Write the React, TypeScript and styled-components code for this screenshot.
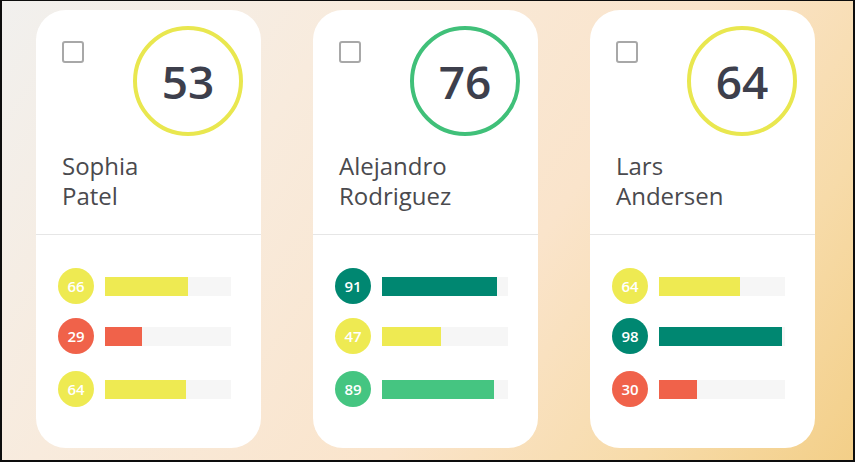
import styled, { createGlobalStyle } from "styled-components";

const GlobalStyle = createGlobalStyle`
  html, body {
    margin: 0;
    padding: 0;
  }
  body {
    font-family: "Open Sans", "Noto Sans", Arial, sans-serif;
  }
`;

const COLORS = {
  yellow: "#eeea52",
  red: "#f0624a",
  teal: "#008771",
  green: "#45c581",
};

const RING = {
  yellow: "#e9e74f",
  green: "#40c079",
};

const Frame = styled.div`
  width: 855px;
  height: 462px;
  box-sizing: border-box;
  border: 2px solid #0d0d0d;
  border-top-width: 1px;
  background: linear-gradient(
    125deg,
    #f1f0ee 0%,
    #f8ebdd 30%,
    #fae4cb 60%,
    #f7dba9 82%,
    #f3cf88 100%
  );
  display: flex;
  align-items: flex-start;
  gap: 52px;
  padding: 9px 0 0 34px;
`;

const Card = styled.div`
  width: 225px;
  height: 438px;
  background: #fff;
  border-radius: 30px;
  display: flex;
  flex-direction: column;
  overflow: hidden;
`;

const Header = styled.div`
  display: flex;
  justify-content: space-between;
  align-items: flex-start;
  padding: 16px 18px 0 26px;
`;

const Check = styled.span`
  display: block;
  width: 18px;
  height: 18px;
  margin-top: 15px;
  border: 2px solid #a8a8a8;
  border-radius: 3px;
  background: #fff;
`;

const ScoreRing = styled.div<{ $ring: string }>`
  width: 110px;
  height: 110px;
  box-sizing: border-box;
  border: 4px solid ${(p) => p.$ring};
  border-radius: 50%;
  display: flex;
  align-items: center;
  justify-content: center;
  font-size: 46px;
  font-weight: 600;
  color: #3d3f4c;
`;

const Name = styled.div`
  padding: 15px 26px 23px;
  font-size: 24px;
  line-height: 30px;
  color: #4a4a4e;
  border-bottom: 1px solid #e6e6e6;
`;

const NameLine = styled.span`
  display: block;
`;

const Metrics = styled.div`
  display: flex;
  flex-direction: column;
  gap: 14px;
  padding: 33px 30px 0 22px;
`;

const Row = styled.div`
  display: flex;
  align-items: center;
  gap: 11px;

  &:last-child {
    margin-top: 3px;
  }
`;

const Dot = styled.div<{ $color: string }>`
  width: 36px;
  height: 36px;
  flex: none;
  border-radius: 50%;
  background: ${(p) => p.$color};
  color: #fff;
  display: flex;
  align-items: center;
  justify-content: center;
  font-size: 15px;
  font-weight: 600;
`;

const Track = styled.div`
  width: 126px;
  height: 19px;
  background: #f6f6f6;
`;

const Fill = styled.div<{ $color: string }>`
  height: 100%;
  background: ${(p) => p.$color};
`;

type Tone = keyof typeof COLORS;

interface Person {
  first: string;
  last: string;
  score: number;
  ring: keyof typeof RING;
  metrics: { value: number; tone: Tone }[];
}

const people: Person[] = [
  {
    first: "Sophia",
    last: "Patel",
    score: 53,
    ring: "yellow",
    metrics: [
      { value: 66, tone: "yellow" },
      { value: 29, tone: "red" },
      { value: 64, tone: "yellow" },
    ],
  },
  {
    first: "Alejandro",
    last: "Rodriguez",
    score: 76,
    ring: "green",
    metrics: [
      { value: 91, tone: "teal" },
      { value: 47, tone: "yellow" },
      { value: 89, tone: "green" },
    ],
  },
  {
    first: "Lars",
    last: "Andersen",
    score: 64,
    ring: "yellow",
    metrics: [
      { value: 64, tone: "yellow" },
      { value: 98, tone: "teal" },
      { value: 30, tone: "red" },
    ],
  },
];

const App = () => (
  <>
    <GlobalStyle />
    <Frame>
      {people.map((p) => (
        <Card key={p.first}>
          <Header>
            <Check />
            <ScoreRing $ring={RING[p.ring]}>{p.score}</ScoreRing>
          </Header>
          <Name>
            <NameLine>{p.first}</NameLine>
            <NameLine>{p.last}</NameLine>
          </Name>
          <Metrics>
            {p.metrics.map((m, i) => (
              <Row key={i}>
                <Dot $color={COLORS[m.tone]}>{m.value}</Dot>
                <Track>
                  <Fill $color={COLORS[m.tone]} style={{ width: `${m.value}%` }} />
                </Track>
              </Row>
            ))}
          </Metrics>
        </Card>
      ))}
    </Frame>
  </>
);

export default App;
